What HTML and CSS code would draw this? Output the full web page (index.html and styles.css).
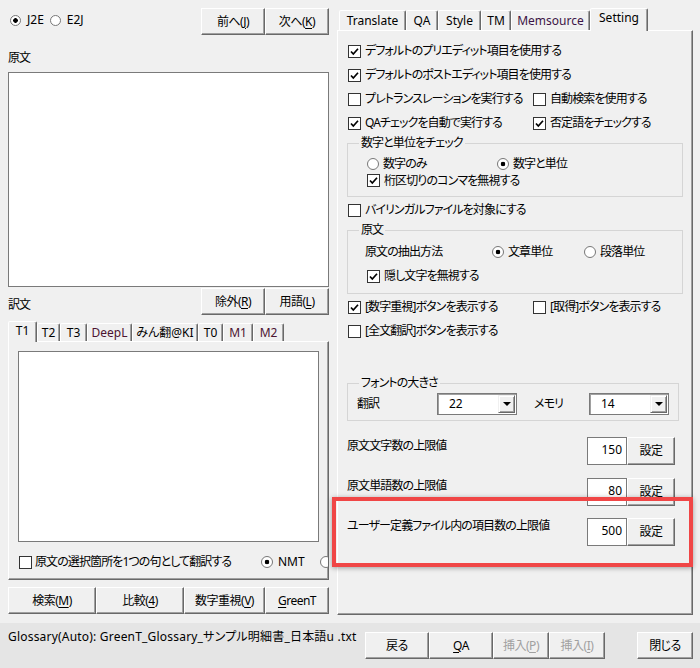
FILE: index.html
```html
<!DOCTYPE html>
<html lang="ja">
<head>
<meta charset="utf-8">
<title>GreenT</title>
<link rel="stylesheet" href="styles.css">
</head>
<body>
<div class="app">
  <div class="main">
    <div class="left">
      <div class="row1">
        <div class="radios">
          <span class="radio on"></span><span class="rl">J2E</span>
          <span class="radio r2"></span><span class="rl">E2J</span>
        </div>
        <div class="btns">
          <button class="btn w64">前へ(<u>J</u>)</button><button class="btn w64">次へ(<u>K</u>)</button>
        </div>
      </div>
      <div class="lbl-src">原文</div>
      <div class="textbox src"></div>
      <div class="row2">
        <span class="lbl-tr">訳文</span>
        <div class="btns">
          <button class="btn w64">除外(<u>R</u>)</button><button class="btn w64">用語(<u>L</u>)</button>
        </div>
      </div>
      <div class="ltabs">
        <div class="tab sel" style="width:29px">T1</div>
        <div class="tab" style="width:23px">T2</div>
        <div class="tab" style="width:27px">T3</div>
        <div class="tab maroon" style="width:45px">DeepL</div>
        <div class="tab" style="width:66px">みん翻@KI</div>
        <div class="tab" style="width:25px">T0</div>
        <div class="tab maroon" style="width:30px">M1</div>
        <div class="tab maroon" style="width:31px">M2</div>
      </div>
      <div class="lpanel">
        <div class="textbox tr"></div>
        <div class="lopt">
          <span class="opt selopt"><span class="cb"></span><span>原文の選択箇所を1つの句として翻訳する</span></span>
          <span class="opt ropt"><span class="radio on"></span><span>NMT</span></span>
          <span class="radio r-last"></span>
        </div>
      </div>
      <div class="row3">
        <button class="btn" style="width:88px">検索(<u>M</u>)</button><button class="btn" style="width:88px">比較(<u>4</u>)</button><button class="btn" style="width:81px">数字重視(<u>V</u>)</button><button class="btn" style="width:64px"><u>G</u>reenT</button>
      </div>
    </div>

    <div class="right">
      <div class="rtabs">
        <div class="tab" style="width:67px">Translate</div>
        <div class="tab" style="width:32px">QA</div>
        <div class="tab" style="width:43px">Style</div>
        <div class="tab" style="width:30px">TM</div>
        <div class="tab purple" style="width:79px">Memsource</div>
        <div class="tab sel" style="width:58px">Setting</div>
      </div>
      <div class="rpanel">
        <div class="crow"><span class="opt"><span class="cb on"><svg viewBox="0 0 11 11"><path d="M2 5.5 L4.3 8 L9 2.8"/></svg></span><span>デフォルトのプリエディット項目を使用する</span></span></div>
        <div class="crow"><span class="opt"><span class="cb on"><svg viewBox="0 0 11 11"><path d="M2 5.5 L4.3 8 L9 2.8"/></svg></span><span>デフォルトのポストエディット項目を使用する</span></span></div>
        <div class="crow"><span class="opt c1"><span class="cb"></span><span>プレトランスレーションを実行する</span></span><span class="opt"><span class="cb"></span><span>自動検索を使用する</span></span></div>
        <div class="crow"><span class="opt c1"><span class="cb on"><svg viewBox="0 0 11 11"><path d="M2 5.5 L4.3 8 L9 2.8"/></svg></span><span>QAチェックを自動で実行する</span></span><span class="opt"><span class="cb on"><svg viewBox="0 0 11 11"><path d="M2 5.5 L4.3 8 L9 2.8"/></svg></span><span>否定語をチェックする</span></span></div>

        <fieldset class="grp g-num">
          <legend>数字と単位をチェック</legend>
          <div class="ginner num-inner">
            <div class="grow17"><span class="opt g1"><span class="radio"></span><span>数字のみ</span></span><span class="opt"><span class="radio on"></span><span>数字と単位</span></span></div>
            <div class="grow17"><span class="opt"><span class="cb on"><svg viewBox="0 0 11 11"><path d="M2 5.5 L4.3 8 L9 2.8"/></svg></span><span>桁区切りのコンマを無視する</span></span></div>
          </div>
        </fieldset>

        <div class="srow bi"><span class="opt"><span class="cb"></span><span>バイリンガルファイルを対象にする</span></span></div>

        <fieldset class="grp g-src">
          <legend>原文</legend>
          <div class="ginner src-inner">
            <div class="srow"><span class="ext">原文の抽出方法</span><span class="opt e1"><span class="radio on"></span><span>文章単位</span></span><span class="opt"><span class="radio"></span><span>段落単位</span></span></div>
            <div class="srow hid"><span class="opt hidopt"><span class="cb on"><svg viewBox="0 0 11 11"><path d="M2 5.5 L4.3 8 L9 2.8"/></svg></span><span>隠し文字を無視する</span></span></div>
          </div>
        </fieldset>

        <div class="srow b1"><span class="opt c1"><span class="cb on"><svg viewBox="0 0 11 11"><path d="M2 5.5 L4.3 8 L9 2.8"/></svg></span><span>[数字重視]ボタンを表示する</span></span><span class="opt"><span class="cb"></span><span>[取得]ボタンを表示する</span></span></div>
        <div class="srow b2"><span class="opt"><span class="cb"></span><span>[全文翻訳]ボタンを表示する</span></span></div>

        <fieldset class="grp g-font">
          <legend>フォントの大きさ</legend>
          <div class="ginner font-inner">
            <span class="fl1">翻訳</span>
            <div class="combo"><span class="val">22</span><span class="dd"><span class="tri"></span></span></div>
            <span class="fl2">メモリ</span>
            <div class="combo"><span class="val">14</span><span class="dd"><span class="tri"></span></span></div>
          </div>
        </fieldset>

        <div class="lim l1"><span class="limlbl">原文文字数の上限値</span><span class="num">150</span><button class="btn set">設定</button></div>
        <div class="lim l2"><span class="limlbl">原文単語数の上限値</span><span class="num">80</span><button class="btn set">設定</button></div>
        <div class="lim l3"><span class="limlbl">ユーザー定義ファイル内の項目数の上限値</span><span class="num">500</span><button class="btn set">設定</button></div>
      </div>
    </div>
  </div>

  <div class="status">
    <span class="stext">Glossary(Auto): GreenT_Glossary_サンプル明細書_日本語u .txt</span>
    <button class="btn sb" style="width:64px">戻る</button><button class="btn sb" style="width:64px"><u>Q</u>A</button><button class="btn sb dis" style="width:56px">挿入(<u>P</u>)</button><button class="btn sb dis" style="width:56px">挿入(<u>I</u>)</button><button class="btn sb close" style="width:56px">閉じる</button>
  </div>
</div>
<div class="highlight"></div>
</body>
</html>
```
FILE: styles.css
```css
* { box-sizing: border-box; }
html, body { margin: 0; padding: 0; }
body {
  width: 700px;
  height: 668px;
  overflow: hidden;
  position: relative;
  background: #f0f0f0;
  color: #000;
  font-family: "Noto Sans", "Noto Sans CJK JP", sans-serif;
  font-size: 12px;
  line-height: 16px;
  letter-spacing: -0.9px;
  font-feature-settings: "palt";
}
.app { display: flex; flex-direction: column; height: 668px; }
.main { display: flex; height: 623px; }

/* ---------- common controls ---------- */
.btn {
  height: 27px;
  padding: 0;
  margin: 0;
  background: #f0f0f0;
  border: 1px solid;
  border-color: #fff #696969 #696969 #fff;
  box-shadow: inset -1px -1px 0 #a0a0a0;
  font: inherit;
  letter-spacing: -0.5px;
  color: #000;
  white-space: nowrap;
  flex-shrink: 0;
}
.btn u { text-decoration-thickness: 1px; text-underline-offset: 2px; }
.w64 { width: 64px; }
.textbox { background: #fff; border: 1px solid #7a7a7a; }

.cb {
  width: 13px; height: 13px; flex-shrink: 0;
  background: #fff; border: 1px solid #333;
  display: flex; align-items: center; justify-content: center;
}
.cb svg { width: 11px; height: 11px; display: block; }
.cb svg path { fill: none; stroke: #000; stroke-width: 1.7; }
.radio {
  width: 12px; height: 12px; flex-shrink: 0;
  border-radius: 50%;
  border: 1px solid #777;
  background: #fff;
}
.radio.on { background: radial-gradient(circle, #000 0 2px, #fff 2.6px); }
.opt { display: flex; align-items: center; gap: 4px; white-space: nowrap; flex-shrink: 0; }

.tab {
  height: 18px;
  flex-shrink: 0;
  background: #f0f0f0;
  border: 1px solid;
  border-bottom: none;
  border-color: #fff #696969 transparent #fff;
  box-shadow: inset -1px 0 0 #a0a0a0;
  border-radius: 2px 2px 0 0;
  display: flex; align-items: center; justify-content: center;
  white-space: nowrap;
  letter-spacing: 0;
}
.tab.sel {
  height: 21px;
  margin-bottom: -1px;
  position: relative;
  z-index: 1;
  align-items: flex-start;
  padding-top: 1px;
}
.maroon { color: #4c1430; }
.purple { color: #3c1446; }

/* ---------- left column ---------- */
.left { width: 321px; margin-left: 8px; padding-top: 8px; display: flex; flex-direction: column; }
.row1 { height: 27px; display: flex; justify-content: space-between; align-items: center; }
.radios { display: flex; align-items: center; margin-top: -3px; margin-left: 2px; letter-spacing: 0; }
.radios .radio { width: 11px; height: 11px; }
.radios .rl { margin-left: 6px; }
.radios .r2 { margin-left: 6px; }
.btns { display: flex; }
.lbl-src { height: 37px; padding-top: 15px; }
.textbox.src { height: 215px; }
.row2 { height: 27px; margin-top: 1px; display: flex; justify-content: space-between; }
.lbl-tr { padding-top: 9px; }
.ltabs { height: 20px; margin-top: 6px; display: flex; align-items: flex-end; }
.lpanel {
  height: 239px;
  border: 1px solid;
  border-color: #fff #696969 #696969 #fff;
  box-shadow: inset -1px -1px 0 #a0a0a0;
  padding: 9px 9px 0 9px;
  overflow: hidden;
}
.textbox.tr { height: 191px; }
.lopt { height: 18px; margin-top: 11px; display: flex; align-items: center; }
.selopt { width: 242px; margin-left: 1px; gap: 3px; }
.ropt { gap: 5px; letter-spacing: 0; }
.r-last { margin-left: 15px; }
.row3 { display: flex; margin-top: 7px; }

/* ---------- right column ---------- */
.right { width: 356px; margin-left: 8px; padding-top: 8px; display: flex; flex-direction: column; }
.rtabs { height: 22px; padding-left: 2px; display: flex; align-items: flex-end; }
.rtabs .tab { height: 20px; }
.rtabs .tab.sel { height: 23px; }
.rpanel {
  height: 585px;
  border: 1px solid;
  border-color: #fff #696969 #696969 #fff;
  box-shadow: inset -1px -1px 0 #a0a0a0;
  padding: 8px 0 0 9px;
}
.crow { height: 24px; display: flex; align-items: center; margin-left: 1px; }
.c1 { width: 185px; }
.srow { height: 18px; display: flex; align-items: center; }
.srow.bi, .srow.b1, .srow.b2 { margin-left: 1px; }

.grp {
  margin: 0;
  padding: 0;
  min-width: 0;
  width: 336px;
  border: 1px solid #d5d5d5;
}
.grp legend { padding: 0 2px; margin-left: 11px; line-height: 16px; }
.ginner { padding-left: 19px; }
.num-inner { padding-top: 4px; padding-bottom: 7px; }
.grow17 { height: 17px; display: flex; align-items: center; }
.g1 { width: 130px; }
.bi { margin-top: 4px; }
.g-src { margin-top: 3px; }
.src-inner { padding-left: 17px; padding-top: 5px; padding-bottom: 8px; }
.ext { width: 127px; flex-shrink: 0; }
.e1 { width: 92px; }
.hid { margin-top: 6px; }
.hidopt { margin-left: 2px; }
.b1 { margin-top: 4px; }
.b2 { margin-top: 6px; }

.g-font { width: 332px; margin-top: 35px; }
.font-inner { padding: 2px 0 5px 9px; display: flex; align-items: center; }
.fl1 { width: 80px; flex-shrink: 0; }
.fl2 { width: 55px; margin-left: 17px; flex-shrink: 0; }
.combo {
  width: 80px; height: 22px; flex-shrink: 0;
  display: flex;
  background: #fff;
  border: 1px solid #7a7a7a;
  box-shadow: inset 1px 1px 0 #a0a0a0;
  padding: 1px;
  letter-spacing: 0;
}
.combo .val { flex: 1; padding-left: 10px; line-height: 18px; }
.combo .dd {
  width: 17px;
  background: #f0f0f0;
  border: 1px solid;
  border-color: #f0f0f0 #696969 #696969 #f0f0f0;
  box-shadow: inset 1px 1px 0 #fff, inset -1px -1px 0 #a0a0a0;
  display: flex; align-items: center; justify-content: center;
}
.tri { width: 0; height: 0; border-left: 4px solid transparent; border-right: 4px solid transparent; border-top: 4px solid #000; }

.lim { height: 28px; display: flex; }
.l1 { margin-top: 16px; }
.l2 { margin-top: 13px; }
.l3 { margin-top: 12px; }
.limlbl { width: 240px; flex-shrink: 0; white-space: nowrap; }
.l1 .limlbl { padding-top: 1px; }
.num {
  width: 40px; height: 28px;
  background: #fff;
  border: 1px solid #7a7a7a;
  text-align: right;
  padding-right: 4px;
  line-height: 24px;
  letter-spacing: 0;
}
.btn.set { width: 48px; height: 28px; }

/* ---------- status bar ---------- */
.status { height: 45px; background: #e5e5e5; display: flex; align-items: flex-start; padding: 6px 0 0 8px; }
.stext { width: 357px; flex-shrink: 0; white-space: nowrap; overflow: hidden; letter-spacing: 0.2px; }
.btn.sb { margin-top: 3px; }
.btn.dis { color: #a0a0a0; }
.btn.close { margin-left: 32px; }

/* annotation overlay */
.highlight {
  position: absolute;
  left: 332px; top: 497px;
  width: 361px; height: 70px;
  border: 4px solid #f04646;
  box-shadow: 0 1px 5px rgba(0, 0, 0, 0.35);
}
```
